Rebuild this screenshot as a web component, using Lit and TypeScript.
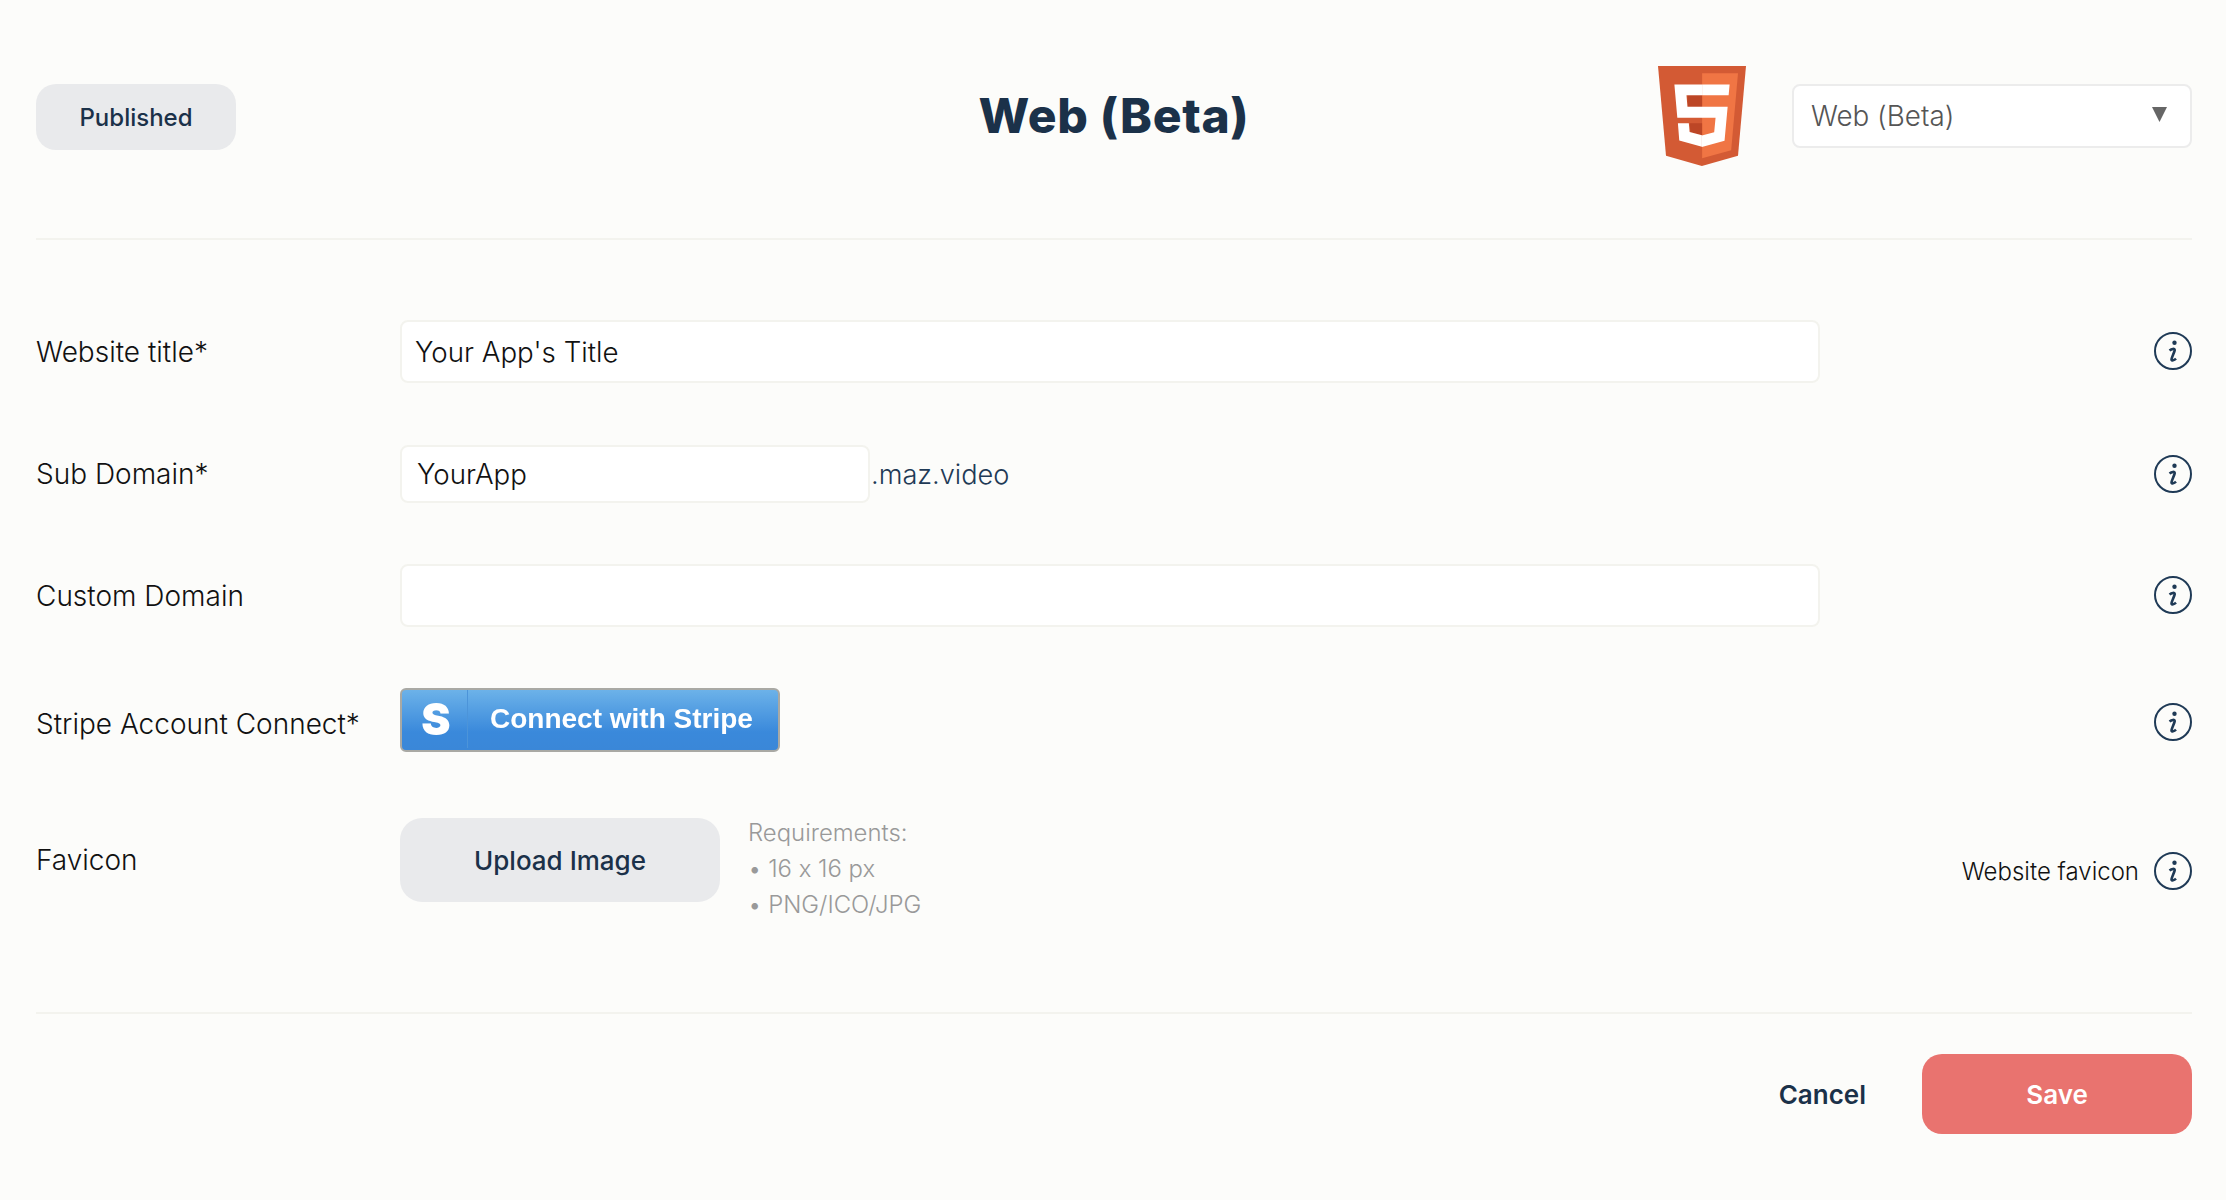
import { LitElement, html, css } from "lit";
import { customElement } from "lit/decorators.js";

const infoIcon = html`
  <svg class="info" width="38" height="38" viewBox="0 0 38 38" aria-hidden="true">
    <circle cx="19" cy="19" r="18" fill="none" stroke="#1f3a56" stroke-width="2"></circle>
    <circle cx="20.500" cy="10.800" r="2.200" fill="#1f3a56"></circle>
    <path d="M15.500 18.500c2-1.500 5.500-2.500 5.200-.3-.3 2-3.200 7.500-3.200 9.300 0 1.500 2.600 1 4.500-.9" fill="none" stroke="#1f3a56" stroke-width="2.600"></path>
  </svg>
`;

const html5Logo = html`
  <svg class="logo" width="88" height="100" viewBox="30 0 451 512" aria-hidden="true">
    <path fill="#d35a34" d="M71 460 30 0h451l-41 460-185 52z"></path>
    <path fill="#f07544" d="M256 472l149-41 35-394H256z"></path>
    <path fill="#bc4626" d="M181 150h75v58h-75zM136 293h56l4 45 60 17v-62z"></path>
    <path fill="#fff" d="M256 208h-75l-5-58h80V94H114l15 171h127zM255 355l-63-17-4-45h-56l7 89 116 32z"></path>
    <path fill="#fff" d="M255 208v57h70l-7 74-63 17v59l116-32 16-175zM256 94v56h136l5-56z"></path>
  </svg>
`;

@customElement("app-root")
export class AppRoot extends LitElement {
  static styles = css`
    :host {
      display: block;
      min-height: 1200px;
      background: #fcfcfa;
      font-family: Inter, "Liberation Sans", sans-serif;
      font-feature-settings: "calt" 0;
      color: #111;
    }

    .page {
      padding: 0 34px 0 36px;
    }

    .top {
      display: grid;
      grid-template-columns: 1fr auto 1fr;
      align-items: center;
      height: 234px;
      padding-bottom: 4px;
      border-bottom: 2px solid #f3f3ee;
    }

    .pill {
      width: 200px;
      height: 66px;
      border-radius: 20px;
      background: #e9eaec;
      color: #1b3149;
      font-size: 24px;
      font-weight: 500;
      display: flex;
      align-items: center;
      justify-content: center;
    }

    h1 {
      margin: 0 0 3px;
      color: #1b3149;
      font-size: 48px;
      font-weight: 800;
      letter-spacing: 0.7px;
    }

    .top-right {
      display: flex;
      align-items: center;
      justify-content: flex-end;
      gap: 46px;
      margin-bottom: 2px;
    }

    .select {
      box-sizing: border-box;
      width: 400px;
      height: 64px;
      border: 2px solid #ececec;
      border-radius: 8px;
      background: #fff;
      padding: 0 23px 0 17px;
      display: flex;
      align-items: center;
      justify-content: space-between;
      color: #555;
      font-size: 27.8px;
      font-weight: 350;
    }

    .select svg {
      margin-bottom: 4px;
    }

    form {
      display: flex;
      flex-direction: column;
      padding-top: 80px;
      height: 774px;
      box-sizing: border-box;
      border-bottom: 2px solid #f3f3ee;
    }

    .row {
      display: grid;
      grid-template-columns: 364px 1fr auto;
      align-items: center;
      margin-bottom: 62px;
    }

    .info {
      margin-bottom: 1px;
    }

    label {
      font-size: 28px;
      font-weight: 350;
    }

    input {
      box-sizing: border-box;
      display: block;
      width: 1420px;
      height: 63px;
      padding: 0 13px;
      border: 2px solid #f3f3ee;
      border-radius: 8px;
      background: #fff;
      color: #111;
      font: 350 27.7px Inter, "Liberation Sans", sans-serif;
      outline: none;
    }

    .domain-row {
      margin-bottom: 61px;
    }

    .domain {
      display: flex;
      align-items: center;
      gap: 1px;
      color: #1f3a56;
      font-size: 27.2px;
      font-weight: 350;
    }

    .domain input {
      width: 470px;
      height: 58px;
      padding: 0 15px;
    }

    .stripe-row {
      margin-bottom: 66px;
    }

    .stripe-row label {
      margin-top: 8px;
    }

    .stripe-row .info {
      margin: 3px 0 0;
    }

    .stripe {
      box-sizing: border-box;
      width: 380px;
      height: 64px;
      border: 2px solid #a9a9a4;
      border-radius: 6px;
      background: linear-gradient(#6cb2e9, #3a89db 70%, #3a87d8);
      color: #fff;
      display: flex;
      align-items: center;
      padding: 0 0 2px;
      filter: blur(0.5px);
      font-family: "Liberation Sans", Arial, sans-serif;
      font-weight: 700;
      font-size: 28px;
      cursor: pointer;
    }

    .stripe-s {
      width: 66px;
      height: 100%;
      padding-left: 3px;
      box-sizing: border-box;
      display: flex;
      align-items: center;
      justify-content: center;
      border-right: 1px solid #4c94d9;
      font-family: Inter, sans-serif;
      font-size: 44px;
      font-weight: 900;
    }

    .stripe-text {
      margin-left: 22px;
    }

    .favicon-row {
      align-items: start;
      margin-bottom: 0;
    }

    .favicon-row label {
      line-height: 84px;
    }

    .upload-wrap {
      display: flex;
      gap: 28px;
    }

    .upload {
      width: 320px;
      height: 84px;
      border: none;
      border-radius: 22px;
      background: #e9eaec;
      color: #1b3149;
      font: 550 26px Inter, "Liberation Sans", sans-serif;
    }

    .reqs {
      margin: -3px 0 0;
      padding: 0;
      list-style: none;
      color: #999;
      font-size: 23.9px;
      font-weight: 350;
      line-height: 36px;
    }

    .hint {
      display: flex;
      align-items: center;
      gap: 15px;
      margin-top: 34px;
      font-size: 24px;
      font-weight: 350;
    }

    .hint .info {
      margin: 0;
    }

    .bottom {
      display: flex;
      justify-content: flex-end;
      align-items: center;
      gap: 56px;
      padding-top: 40px;
    }

    .cancel,
    .save {
      border: none;
      background: none;
      font: 600 26px Inter, "Liberation Sans", sans-serif;
      padding: 0;
    }

    .cancel {
      color: #1b3149;
    }

    .save {
      width: 270px;
      height: 80px;
      border-radius: 20px;
      background: #e9736f;
      color: #fff;
    }
  `;

  render() {
    return html`
      <div class="page">
        <header class="top">
          <div class="pill">Published</div>
          <h1>Web (Beta)</h1>
          <div class="top-right">
            ${html5Logo}
            <div class="select">
              <span>Web (Beta)</span>
              <svg width="15" height="15" viewBox="0 0 15 15" aria-hidden="true"><path d="M0 0h15L7.500 15z" fill="#666"></path></svg>
            </div>
          </div>
        </header>

        <form>
          <div class="row">
            <label>Website title*</label>
            <input type="text" value="Your App's Title" />
            ${infoIcon}
          </div>
          <div class="row domain-row">
            <label>Sub Domain*</label>
            <div class="domain"><input type="text" value="YourApp" /><span>.maz.video</span></div>
            ${infoIcon}
          </div>
          <div class="row domain-row">
            <label>Custom Domain</label>
            <input type="text" />
            ${infoIcon}
          </div>
          <div class="row stripe-row">
            <label>Stripe Account Connect*</label>
            <div class="stripe"><span class="stripe-s">S</span><span class="stripe-text">Connect with Stripe</span></div>
            ${infoIcon}
          </div>
          <div class="row favicon-row">
            <label>Favicon</label>
            <div class="upload-wrap">
              <button type="button" class="upload">Upload Image</button>
              <ul class="reqs">
                <li>Requirements:</li>
                <li>• 16 x 16 px</li>
                <li>• PNG/ICO/JPG</li>
              </ul>
            </div>
            <div class="hint"><span>Website favicon</span>${infoIcon}</div>
          </div>
        </form>

        <footer class="bottom">
          <button type="button" class="cancel">Cancel</button>
          <button type="button" class="save">Save</button>
        </footer>
      </div>
    `;
  }
}
